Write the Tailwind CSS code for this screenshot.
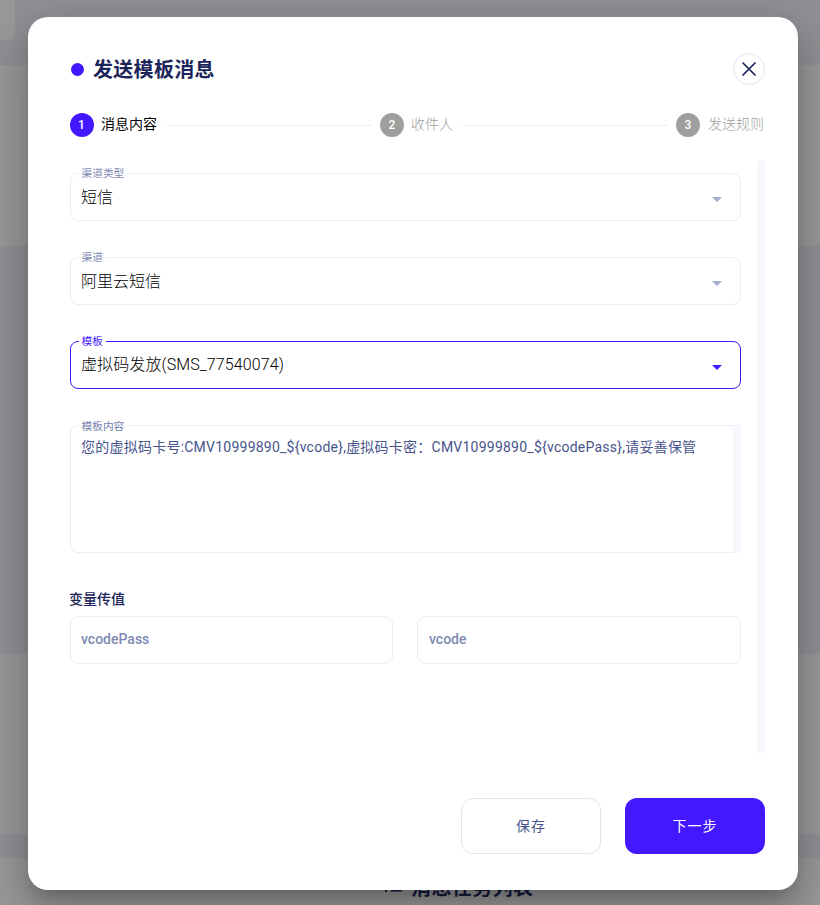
<!DOCTYPE html>
<html lang="zh-CN">
<head>
<meta charset="utf-8">
<title>发送模板消息</title>
<script src="https://cdn.jsdelivr.net/npm/@tailwindcss/browser@4"></script>
</head>
<body class="relative h-[905px] w-[820px] overflow-hidden bg-[#909196] font-[Roboto,'Noto_Sans_CJK_SC',sans-serif]">
  <!-- dimmed page -->
  <div class="flex h-full flex-col">
    <div class="h-[65px]"><div class="h-10 w-[15px] rounded-br-md bg-[#999]"></div></div>
    <div class="h-[181px] bg-[#999]"></div>
    <div class="h-[408px]"></div>
    <div class="h-[180px] bg-[#999]"></div>
    <div class="h-6"></div>
    <div class="flex h-[47px] items-start gap-2 bg-[#999] pt-[15px] pl-[384px] text-[#161c41]">
      <svg class="mt-1 h-5 w-5" viewBox="0 0 20 20" fill="currentColor"><rect x="1" y="2" width="2" height="2"/><rect x="7" y="2" width="11" height="2"/><rect x="1" y="7" width="2" height="2"/><rect x="7" y="7" width="11" height="2"/><rect x="1" y="12" width="2" height="3"/><rect x="7" y="12" width="11" height="2.500"/></svg>
      <span class="-ml-px text-xl leading-[30px] font-bold tracking-[0.4px]">消息任务列表</span>
    </div>
  </div>

  <!-- dialog -->
  <div class="absolute top-[17px] left-[28px] flex h-[873px] w-[770px] flex-col rounded-[20px] bg-white pt-9 pr-[33px] pb-9 pl-[42px] shadow-[0_11px_15px_-7px_rgba(0,0,0,0.2),0_24px_38px_3px_rgba(0,0,0,0.14),0_9px_46px_8px_rgba(0,0,0,0.12)]">
    <div class="flex h-8 items-center">
      <span class="ml-px h-[13px] w-[13px] rounded-full bg-[#4318ff]"></span>
      <h1 class="ml-[9px] flex-1 pt-0.5 text-xl leading-8 font-bold tracking-[0.3px] text-[#1b2559]">发送模板消息</h1>
      <button class="flex h-8 w-8 items-center justify-center rounded-full border border-[#e0e5f2] pr-px">
        <svg class="h-[14px] w-[14px]" viewBox="0 0 14 14" fill="none" stroke="#1b2559" stroke-width="1.7" stroke-linecap="round"><path d="M1 1l12 12M13 1L1 13"/></svg>
      </button>
    </div>

    <div class="mt-7 flex h-6 items-center text-sm font-light text-[#9e9e9e]">
      <span class="flex h-6 w-6 items-center justify-center rounded-full bg-[#4318ff] pr-px text-xs font-medium text-white">1</span>
      <span class="ml-[7px] w-[57px] pb-0.5 whitespace-nowrap font-normal text-black">消息内容</span>
      <span class="mt-px ml-2 h-px flex-1 bg-[#e9edf7]"></span>
      <span class="ml-2 flex h-6 w-6 items-center justify-center rounded-full bg-[#9e9e9e] text-xs font-medium text-white">2</span>
      <span class="ml-[7px] w-[43px] pb-0.5 whitespace-nowrap">收件人</span>
      <span class="mt-px ml-2 h-px flex-1 bg-[#e9edf7]"></span>
      <span class="ml-2 flex h-6 w-6 items-center justify-center rounded-full bg-[#9e9e9e] text-xs font-medium text-white">3</span>
      <span class="ml-2 w-[57px] pb-0.5 whitespace-nowrap">发送规则</span>
    </div>

    <div class="mt-6 flex h-[592px] justify-between">
      <div class="w-[671px] pt-3">
        <div class="relative flex h-12 items-center rounded-lg border border-[#e9edf7] pr-[18.5px] pl-2.5">
          <span class="absolute -top-2 left-2 bg-white pr-[3px] pl-[2.5px] text-[10.7px] leading-[15px] text-[#7e8ab5]">渠道类型</span>
          <span class="flex-1 pt-0.5 text-base font-light text-black">短信</span>
          <svg class="mt-[5px] h-[5px] w-[10px]" viewBox="0 0 10 5" fill="#a3aed0"><path d="M0 0h10L5 5z"/></svg>
        </div>
        <div class="relative mt-9 flex h-12 items-center rounded-lg border border-[#e9edf7] pr-[18.5px] pl-2.5">
          <span class="absolute -top-2 left-2 bg-white pr-[3px] pl-[2.5px] text-[10.7px] leading-[15px] text-[#7e8ab5]">渠道</span>
          <span class="flex-1 pt-0.5 text-base font-light text-black">阿里云短信</span>
          <svg class="mt-[5px] h-[5px] w-[10px]" viewBox="0 0 10 5" fill="#a3aed0"><path d="M0 0h10L5 5z"/></svg>
        </div>
        <div class="relative mt-9 flex h-12 items-center rounded-lg border border-[#4318ff] pr-[18.5px] pl-2.5">
          <span class="absolute -top-2 left-2 bg-white pr-[3px] pl-[2.5px] text-[10.7px] leading-[15px] text-[#4318ff]">模板</span>
          <span class="flex-1 text-base font-light tracking-[0.1px] text-black">虚拟码发放(SMS_77540074)</span>
          <svg class="mt-[5px] h-[5px] w-[10px]" viewBox="0 0 10 5" fill="#4318ff"><path d="M0 0h10L5 5z"/></svg>
        </div>
        <div class="relative mt-9 flex h-32 rounded-lg border border-[#e9edf7] pl-2.5">
          <span class="absolute -top-[7px] left-2 bg-white pr-[3px] pl-[2.5px] text-[10.7px] leading-[15px] text-[#707eae]">模板内容</span>
          <span class="flex-1 pt-[11px] text-sm leading-5 tracking-[0.235px] whitespace-nowrap text-[#47548c]">您的虚拟码卡号:CMV10999890_${vcode},虚拟码卡密：CMV10999890_${vcodePass},请妥善保管</span>
          <span class="-my-px -mr-px w-2 bg-[#f6f8fd]"></span>
        </div>
        <h2 class="-ml-px mt-9 text-sm leading-5 font-medium text-[#1b2559]">变量传值</h2>
        <div class="mt-[7px] grid grid-cols-[323px_324px] gap-6 text-sm font-medium text-[#8089b4]">
          <div class="flex h-12 items-center rounded-lg border border-[#e9edf7] pb-0.5 pl-2.5">vcodePass</div>
          <div class="flex h-12 items-center rounded-lg border border-[#e9edf7] pb-0.5 pl-[11px]">vcode</div>
        </div>
      </div>
      <div class="w-2 rounded-b-xs bg-[#f6f8fd]"></div>
    </div>

    <div class="mt-auto flex justify-end gap-6 text-sm tracking-[1px]">
      <button class="h-14 w-[140px] rounded-xl border border-[#e0e5f2] text-[#47548c]">保存</button>
      <button class="h-14 w-[140px] rounded-xl bg-[#4318ff] text-white">下一步</button>
    </div>
  </div>
</body>
</html>
